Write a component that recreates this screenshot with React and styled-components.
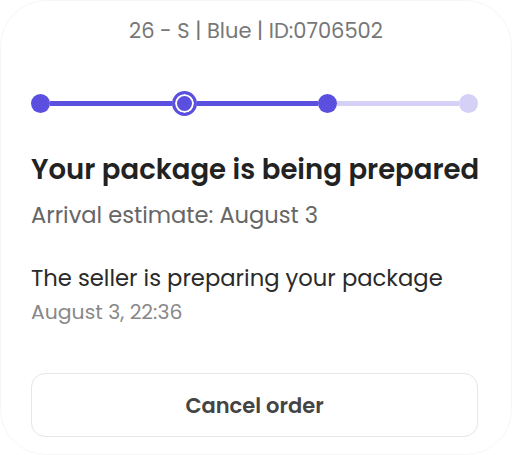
import styled, { createGlobalStyle } from 'styled-components';

const GlobalStyle = createGlobalStyle`
  html, body {
    margin: 0;
    padding: 0;
    background: #ffffff;
  }
  body {
    font-family: "Poppins", "DejaVu Sans", "Noto Sans", sans-serif;
  }
`;

const steps = ['done', 'current', 'done', 'todo'];

const App = () => {
  return (
    <>
      <GlobalStyle />
      <CardWithStyled>
        <VariantWithStyled>26 - S | Blue | ID:0706502</VariantWithStyled>

        <StepperWithStyled>
          { steps.map((state, i) => [
            i > 0 && <SegmentWithStyled key={`s${i}`} active={state !== 'todo'} />,
            state === 'current'
              ? <RingWithStyled key={`d${i}`} />
              : <DotWithStyled key={`d${i}`} active={state !== 'todo'} />
          ]) }
        </StepperWithStyled>

        <TitleWithStyled>Your package is being prepared</TitleWithStyled>
        <EstimateWithStyled>Arrival estimate: August 3</EstimateWithStyled>

        <EventWithStyled>
          <EventTextWithStyled>The seller is preparing your package</EventTextWithStyled>
          <EventDateWithStyled>August 3, 22:36</EventDateWithStyled>
        </EventWithStyled>

        <CancelButtonWithStyled type="button">Cancel order</CancelButtonWithStyled>
      </CardWithStyled>
    </>
  );
}

const CardWithStyled = styled.div`
  box-sizing: border-box;
  width: 512px;
  height: 455px;
  padding: 16px 33px 0 30px;
  border: 1px solid #f6f6f6;
  border-radius: 46px;
  display: flex;
  flex-direction: column;
`;

const VariantWithStyled = styled.div`
  text-align: center;
  font-size: 21px;
  color: #777777;
  line-height: 28px;
  margin-left: 3px;
`;

const StepperWithStyled = styled.div`
  display: flex;
  align-items: center;
  height: 26px;
  margin-top: 45px;
`;

const SegmentWithStyled = styled.div`
  flex: 1;
  height: 5px;
  background: ${({ active }) => active ? '#5b4fdf' : '#d5d0f6'};
`;

const DotWithStyled = styled.div`
  width: 19px;
  height: 19px;
  border-radius: 50%;
  flex: none;
  background: ${({ active }) => active ? '#5b4fdf' : '#d5d0f6'};
`;

const RingWithStyled = styled.div`
  box-sizing: border-box;
  width: 25px;
  height: 25px;
  border-radius: 50%;
  flex: none;
  border: 3px solid #5b4fdf;
  background: #5b4fdf;
  box-shadow: inset 0 0 0 2px #ffffff;
`;

const TitleWithStyled = styled.h1`
  margin: 36px 0 0;
  font-size: 27.5px;
  font-weight: 600;
  color: #222222;
  line-height: 36px;
  white-space: nowrap;
`;

const EstimateWithStyled = styled.div`
  margin-top: 14px;
  font-size: 22.6px;
  color: #666666;
  line-height: 26px;
  white-space: nowrap;
`;

const EventWithStyled = styled.div`
  margin-top: 36px;
  display: flex;
  flex-direction: column;
  gap: 8px;
`;

const EventTextWithStyled = styled.div`
  font-size: 22.7px;
  color: #2a2a2a;
  line-height: 28px;
  white-space: nowrap;
`;

const EventDateWithStyled = styled.div`
  font-size: 20.4px;
  color: #888888;
  line-height: 24px;
`;

const CancelButtonWithStyled = styled.button`
  margin-top: 49px;
  height: 64px;
  width: 100%;
  border: 1px solid #e6e6e6;
  border-radius: 14px;
  background: #ffffff;
  font-family: inherit;
  font-size: 21px;
  font-weight: 600;
  color: #444444;
  cursor: pointer;
`;

export default App;
